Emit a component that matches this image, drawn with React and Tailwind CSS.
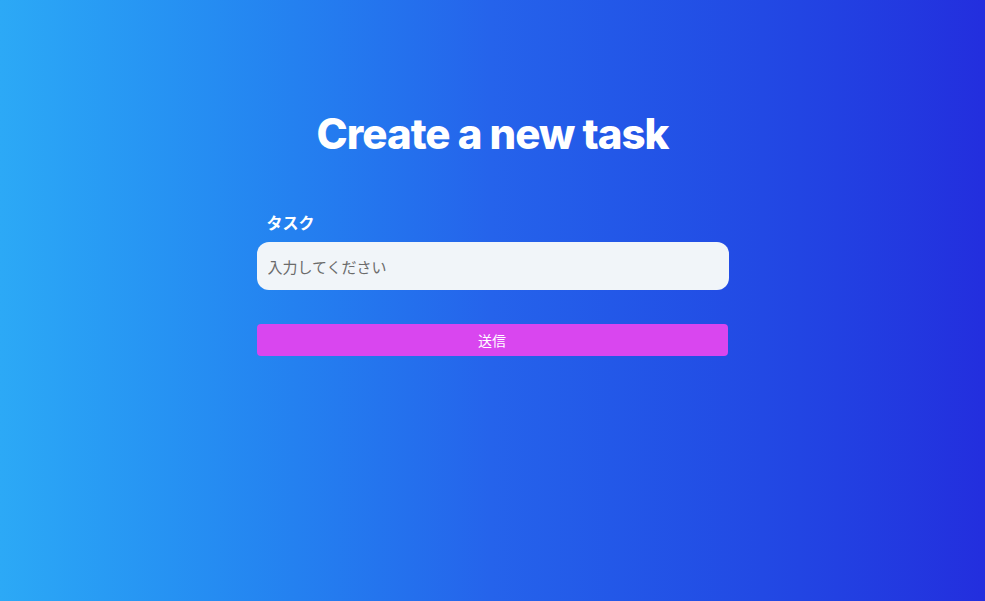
export default function App() {
  return (
    <div className="min-h-screen w-full bg-gradient-to-r from-[#2ca9f6] via-[#2563eb] to-[#232ede] flex flex-col items-center font-['Inter','Noto_Sans_CJK_JP',sans-serif]">
      {/* Page heading */}
      <h1 className="mt-[108px] text-[42px] leading-[52px] font-extrabold text-white tracking-[-1px]">
        Create a new task
      </h1>

      {/* Task form */}
      <form className="mt-[52px] w-[472px] flex flex-col" onSubmit={(e) => e.preventDefault()}>
        <label className="pl-[10px] text-[16px] leading-[20px] font-bold text-white font-['Noto_Sans_CJK_JP',sans-serif]">
          タスク
        </label>
        <input
          type="text"
          placeholder="入力してください"
          className="mt-[10px] h-[48px] w-full rounded-[12px] bg-[#f1f5f9] px-[11px] text-[15px] text-gray-700 placeholder:text-[#6b6b6b] outline-none font-['Noto_Sans_CJK_JP',sans-serif]"
        />
        <button
          type="submit"
          className="mt-[34px] h-[32px] w-[471px] rounded-[4px] bg-[#d946ef] text-[14px] text-white font-['Noto_Sans_CJK_JP',sans-serif]"
        >
          送信
        </button>
      </form>
    </div>
  );
}
